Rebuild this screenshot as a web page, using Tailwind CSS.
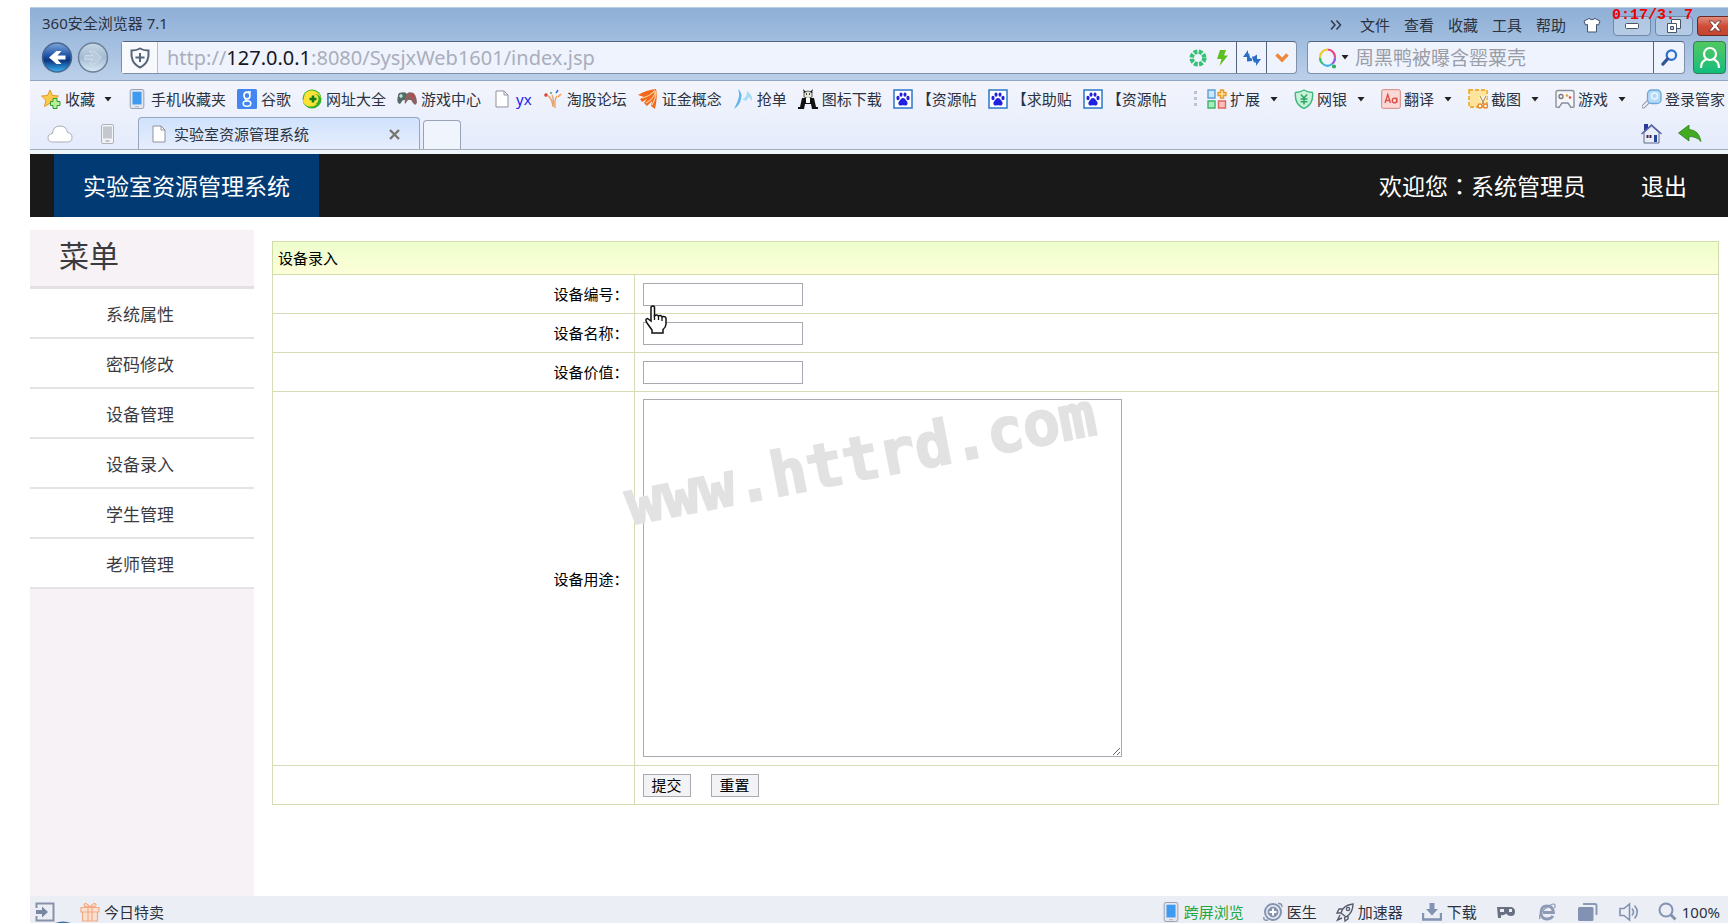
<!DOCTYPE html>
<html lang="zh-CN">
<head>
<meta charset="utf-8">
<title>实验室资源管理系统</title>
<script src="https://cdn.jsdelivr.net/npm/@tailwindcss/browser@4"></script>
</head>
<body class="flex min-h-screen flex-col overflow-x-hidden bg-white pl-[30px] pt-[7px] font-['Noto_Sans','Noto_Sans_CJK_SC',sans-serif] text-[15px] leading-5 text-[#2b3240]">
<svg class="hidden" aria-hidden="true">
  <symbol id="paw" viewBox="0 0 20 20"><rect x="1" y="1" width="18" height="18" fill="#fff" stroke="#2a78c8" stroke-width="1.5"/><g fill="#1f22e0"><ellipse cx="5" cy="9" rx="1.6" ry="2.2"/><ellipse cx="8" cy="5.6" rx="1.5" ry="2.2"/><ellipse cx="12" cy="5.6" rx="1.5" ry="2.2"/><ellipse cx="15" cy="9" rx="1.6" ry="2.2"/><path d="M10 9c-2 0-2.500 2-4 3.500-1.500 2 0 4.500 2 4 1.500-.4 2.500-.4 4 0 2 .5 3.500-2 2-4C12.500 11 12 9 10 9z"/></g></symbol>
  <symbol id="page" viewBox="0 0 14 18"><path d="M1 1h8l4 4v12H1z" fill="#fff" stroke="#8f939c"/><path d="M9 1v4h4" fill="none" stroke="#8f939c"/></symbol>
  <symbol id="phone" viewBox="0 0 16 22"><rect x=".5" y=".5" width="15" height="21" rx="2" fill="#e4e8ee" stroke="#8d99ad"/><rect x="3" y="3" width="10" height="14" fill="#3f9bf0"/><path d="M6 19.500h4" stroke="#aaa"/></symbol>
  <symbol id="caret" viewBox="0 0 8 5"><path d="M.5 0h7L4 4.500z" fill="#222"/></symbol>
</svg>

<header>
  <div class="bg-linear-to-b from-[#8fafd6] via-[#a3bfe0] to-[#bdd0ea] border-t border-[#b9cde4]">
    <div class="flex h-[33px] items-center pl-3">
      <h1 class="pb-1">360安全浏览器 7.1</h1>
      <nav class="ml-auto flex items-center gap-[14px]" aria-label="浏览器菜单">
        <button class="w-4" aria-label="更多"><svg class="h-3 w-3" viewBox="0 0 12 12" fill="none" stroke="#2f3b4c" stroke-width="1.500"><path d="M1 1.500L5 6l-4 4.500M6.500 1.500l4 4.500-4 4.500"/></svg></button>
        <button>文件</button><button>查看</button><button>收藏</button><button>工具</button><button>帮助</button>
      </nav>
      <button class="ml-[17px]" aria-label="皮肤"><svg class="h-4 w-[18px]" viewBox="0 0 18 16"><path d="M6 1.500q3 2.500 6 0l5 2.500-1.500 4-2-.5V15h-9V7.500l-2 .5L1 4z" fill="#fff" stroke="#44536b"/></svg></button>
      <div class="relative ml-3 flex gap-1 pt-[2px]">
        <button class="flex h-5 w-[38px] items-center justify-center rounded-sm border border-[#6f87a8] bg-white/25" aria-label="最小化"><svg class="h-[6px] w-[14px]" viewBox="0 0 14 6"><rect x=".5" y=".5" width="13" height="5" rx="1" fill="#fff" stroke="#4b5563"/></svg></button>
        <button class="flex h-5 w-[38px] items-center justify-center rounded-sm border border-[#6f87a8] bg-white/25" aria-label="还原"><svg class="h-[14px] w-[14px]" viewBox="0 0 14 14" fill="#fff" stroke="#4b5563"><path d="M4.500.5h9v9h-9z"/><path d="M.5 4.500h9v9h-9z"/><path d="M3.500 7.500h3v3h-3z" fill="#a9bfdc"/></svg></button>
        <button class="flex h-5 w-[31px] items-center justify-center rounded-l-sm border border-r-0 border-[#6b2a25] bg-linear-to-b from-[#e08c7c] via-[#cf4c38] to-[#c2452f] pl-1" aria-label="关闭"><svg class="h-3 w-[14px]" viewBox="0 0 14 12"><path d="M1 1h3.500L7 3.800 9.500 1H13L9 6l4 5H9.500L7 8.200 4.500 11H1l4-5z" fill="#fff" stroke="#5b3030" stroke-width=".8"/></svg></button>
        <span class="absolute -left-px -top-2 whitespace-pre font-['Liberation_Mono',monospace] text-[15px] font-bold leading-5 text-[#f00000]">0:17/3: 7</span>
      </div>
    </div>

    <div class="flex h-10 items-start border-b border-[#93a6c4]">
      <div class="flex pl-[11px]">
        <button aria-label="后退"><svg class="h-[33px] w-8" viewBox="0 0 32 33"><defs><linearGradient id="bk" x2="0" y2="1"><stop stop-color="#7da9dd"/><stop offset=".45" stop-color="#1c4fa3"/><stop offset=".6" stop-color="#0b3580"/><stop offset="1" stop-color="#39b6f5"/></linearGradient></defs><circle cx="16" cy="16.500" r="14.500" fill="url(#bk)" stroke="#4a6690" stroke-width="1.500"/><path d="M24.500 14.500v4h-8l4 4.500h-5L8 16.500 15.500 10h5l-4 4.500z" fill="#fff"/></svg></button>
        <button class="ml-1" aria-label="前进"><svg class="h-[33px] w-8" viewBox="0 0 32 33"><defs><linearGradient id="fw" x2="0" y2="1"><stop stop-color="#c7d8e8"/><stop offset=".5" stop-color="#a5bbd2"/><stop offset="1" stop-color="#d7eaf6"/></linearGradient></defs><circle cx="16" cy="16.500" r="14.500" fill="url(#fw)" stroke="#6d8099" stroke-width="1.500"/><path d="M8 14.500h8l-4-4.500h5l7.500 6.500L17 23h-5l4-4.500H8z" fill="#b9cbdc" stroke="#cddbe8"/></svg></button>
      </div>
      <div class="ml-3 flex h-[33px] min-w-0 flex-1 rounded-sm border border-[#808fa8] border-t-[#54647c] bg-[#eff3fe]">
        <button class="flex w-9 shrink-0 items-center justify-center border-r border-[#b5bfd0] bg-[#f7f9fd]" aria-label="网站安全"><svg class="h-[22px] w-[22px]" viewBox="0 0 22 22" fill="none" stroke="#56657a" stroke-width="2"><path d="M11 1.500c2.500 1.500 5.500 2 8.500 2 .5 7-.5 13-8.500 17-8-4-9-10-8.500-17 3 0 6-.5 8.500-2z"/><path d="M11 6v9M6.500 10.500h9"/></svg></button>
        <a href="#" class="flex-1 truncate pl-[9px] text-[20px] leading-8 text-[#a9aeba]">http://<span class="text-[#15181f]">127.0.0.1</span>:8080/SysjxWeb1601/index.jsp</a>
        <div class="flex shrink-0 items-center">
          <button aria-label="兼容模式"><svg class="h-[18px] w-[18px]" viewBox="0 0 18 18" fill="none"><circle cx="9" cy="9" r="6.300" stroke="#35c274" stroke-width="4.500" stroke-dasharray="3.600 1.350"/></svg></button>
          <button class="ml-[9px] mr-2" aria-label="加速"><svg class="h-4 w-3" viewBox="0 0 12 16"><path d="M4 0h6L8 5.500h4L3.500 16l2-7H1z" fill="#5fbf1e"/></svg></button>
          <button class="flex h-[31px] w-[30px] items-center justify-center border-l border-[#54647c]" aria-label="刷新"><svg class="h-4 w-[18px]" viewBox="0 0 18 16" fill="#2c6fc4"><path d="M4 11.500V7H0l5-7v3.500h1L7 7.500l2 1.500v2z"/><path d="M14 4.500V9h4l-5 7v-3.500h-2L9.500 9 9 6.500h2z"/></svg></button>
          <button class="flex h-[31px] w-[30px] items-center justify-center border-l border-[#54647c]" aria-label="历史"><svg class="h-[10px] w-[14px]" viewBox="0 0 14 10" fill="none" stroke="#f0883c" stroke-width="3.500"><path d="M1.500 1.500L7 7l5.500-5.500"/></svg></button>
        </div>
      </div>
      <form class="ml-[10px] flex h-[33px] w-[378px] rounded-sm border border-[#808fa8] border-t-[#54647c] bg-[#eff3fe]">
        <button type="button" class="flex items-center gap-1 pl-[10px] pr-[6px]" aria-label="搜索引擎"><svg class="h-[22px] w-[19px]" viewBox="0 0 19 22" fill="none" stroke-width="2.200"><path d="M9.500 2.500a7.500 8 0 0 1 7.500 8" stroke="#e8457e"/><path d="M17 10.500a7.500 8 0 0 1-3 6.500" stroke="#8f5fd0"/><path d="M14 17a7.500 8 0 0 1-9 0" stroke="#37b5e8"/><path d="M5 17a7.500 8 0 0 1-3-6.500" stroke="#38c06d"/><path d="M2 10.500a7.500 8 0 0 1 7.500-8" stroke="#f3c62f"/><circle cx="16" cy="19.500" r="1" stroke="#2fb457"/></svg><svg class="h-[5px] w-2"><use href="#caret"/></svg></button>
        <input aria-label="搜索" class="min-w-0 flex-1 text-[19px] leading-7 placeholder:text-[#999da6] outline-none" placeholder="周黑鸭被曝含罂粟壳">
        <button type="button" class="flex w-[31px] items-center justify-center border-l border-[#54647c]" aria-label="搜索按钮"><svg class="h-[17px] w-[17px]" viewBox="0 0 18 18" fill="none" stroke="#2c72cf"><circle cx="11" cy="6.500" r="5" stroke-width="2.400"/><path d="M7 10.500L2 16" stroke-width="3.400" stroke="#33549a" stroke-linecap="round"/></svg></button>
      </form>
      <button class="ml-2 mr-[2px] flex h-[33px] w-[33px] items-center justify-center rounded-sm border border-[#3b7a55] bg-linear-to-b from-[#4fc860] to-[#08bd7c]" aria-label="账户"><svg class="h-6 w-6" viewBox="0 0 24 24" fill="none" stroke="#fff" stroke-width="2.200"><circle cx="12" cy="8" r="6"/><path d="M3 22c0-5 3-8 6-9M21 22c0-5-3-8-6-9"/></svg></button>
    </div>
  </div>

  <div class="border-b-4 border-[#eef5fb] bg-linear-to-b from-[#f3f5fd] to-[#e4ebfb]">
    <div class="flex h-9 items-center whitespace-nowrap pl-[11px] pr-[3px]">
      <nav class="flex items-center gap-[11px]" aria-label="收藏栏">
        <a href="#" class="flex items-center gap-1"><svg class="h-5 w-5" viewBox="0 0 20 20"><path d="M9 1l2.500 5.500 6 .5-4.500 4.300 1.500 6L9 14.200 3.500 17.500 5 11.300.5 7l6-.5z" fill="#fdc94a" stroke="#dd9a28"/><path d="M12 9.500h4v3h3v4h-3v3h-4v-3H9.500v-4H12z" fill="#b8f09a" stroke="#2f9a2a"/></svg>收藏<svg class="ml-[5px] mr-1 h-[5px] w-2"><use href="#caret"/></svg></a>
        <a href="#" class="flex items-center gap-1"><svg class="h-5 w-5"><use href="#phone"/></svg>手机收藏夹</a>
        <a href="#" class="flex items-center gap-1"><svg class="h-5 w-5" viewBox="0 0 20 20"><rect width="20" height="20" rx="1.500" fill="#4386f1"/><g fill="none" stroke="#fff" stroke-width="1.600"><ellipse cx="10" cy="6.500" rx="3" ry="3.400"/><path d="M11 3h3M9 10q-1 1.500 1.500 2"/><ellipse cx="10" cy="14.500" rx="3.800" ry="2.800"/></g></svg>谷歌</a>
        <a href="#" class="flex items-center gap-1"><svg class="h-5 w-5" viewBox="0 0 20 20"><circle cx="10" cy="10" r="9.500" fill="#2fae2c"/><path d="M3 4.500C9-2 19 3 19 10c-1-5-9-7-11-2-3 3 0 8 7 7-5 5-13 2-14-3z" fill="#ffe234"/><circle cx="11" cy="10" r="5.500" fill="#fbe53a"/><path d="M11 6.500v7M7.500 10h7" stroke="#0c7a1e" stroke-width="2.600"/></svg>网址大全</a>
        <a href="#" class="flex items-center gap-1"><svg class="h-5 w-5" viewBox="0 0 20 20"><path d="M1 7q0-4 4-3.500Q10 2 11 8l-1 3H6l-3 4Q-1 14 1 7z" fill="#556a62"/><path d="M9 7q1-5 6-3.500Q19 4 20 13q-1 5-4 1l-2-3h-3l-3 4Q7 13 9 7z" fill="#8a6360"/><path d="M4 5v4M2 7h4" stroke="#cfe" stroke-width="1.200"/><circle cx="15" cy="7" r="1.400" fill="#e33"/></svg>游戏中心</a>
        <a href="#" class="flex items-center gap-1 pl-[3px] text-[#2424e8]"><svg class="h-[18px] w-[17px]" viewBox="0 0 17 18"><use href="#page" width="14" height="18"/></svg>yx</a>
        <a href="#" class="flex items-center gap-1"><svg class="h-5 w-5" viewBox="0 0 20 20" fill="none" stroke-width="1.400"><path d="M5 7q4 2 5 11M9 6q2 4 1 12M14 7q-3 4-2 12" stroke="#e8a56f"/><circle cx="3" cy="6" r="1" stroke="#d8352b"/><path d="M8 3v2" stroke="#3aa53a"/><path d="M15 1l-2 3" stroke="#3b5fe0"/><path d="M18 5l-3 3" stroke="#f0a030"/></svg>淘股论坛</a>
        <a href="#" class="flex items-center gap-1"><svg class="h-5 w-5" viewBox="0 0 20 20"><path d="M0 6Q8 1 18 0q2 6-1 20l-4-3 1-5-5 5-3-3 3-4-5 3-2-3 4-2z" fill="#f2681d"/><path d="M4 9Q13 7 17 1M8 14q8-4 9.500-12M14 16q4-7 4-13" stroke="#ffd09a" stroke-width="1.200" fill="none"/></svg>证金概念</a>
        <a href="#" class="flex items-center gap-1"><svg class="h-5 w-5" viewBox="0 0 20 20"><path d="M5 0q5 4 3 10-1 6-7 10 4-8 4.500-11Q7 6 5 0z" fill="#62b6ea"/><path d="M14 2q6 4 5 10l-3-4-3 4-4-2q5-1 5-8z" fill="#a6ddf5"/></svg>抢单</a>
        <a href="#" class="flex items-center gap-1"><svg class="h-5 w-5" viewBox="0 0 20 20"><path d="M6 3q4-2 8 0v5q-4 3-8 0z" fill="#e8e8dc" stroke="#333" stroke-width=".8"/><path d="M5 0l3 3-2 1zM15 0l-3 3 2 1zM4 9h12l2 9h2v2h-6l-1-5H7l-1 5H0v-2h2z" fill="#111"/><path d="M8 9h4v5H8z" fill="#fff"/><path d="M8 5h1M11 5h1" stroke="#111" stroke-width="1.500"/></svg>图标下载</a>
        <a href="#" class="flex items-center gap-1"><svg class="h-5 w-5"><use href="#paw"/></svg>【资源帖</a>
        <a href="#" class="flex items-center gap-1"><svg class="h-5 w-5"><use href="#paw"/></svg>【求助贴</a>
        <a href="#" class="flex items-center gap-1"><svg class="h-5 w-5"><use href="#paw"/></svg>【资源帖</a>
      </nav>
      <div class="ml-auto flex items-center">
        <svg class="mr-[9px] h-4 w-1" viewBox="0 0 4 16" fill="#bcc3d0"><path d="M0 0h3v3H0zM0 6h3v3H0zM0 12h3v3H0z"/></svg>
        <div class="flex items-center gap-4">
          <button class="flex items-center gap-[3px]"><svg class="h-5 w-5" viewBox="0 0 20 20" stroke-width="1.400"><path d="M1 1h7v8H1z" fill="#cde6fa" stroke="#5b9ed6"/><path d="M1 12h7v7H1z" fill="#a9ecc0" stroke="#3fb36a"/><path d="M11.500 12h7v7h-7z" fill="#fbc0bd" stroke="#e0665f"/><path d="M13.500 1h3v2.500H19v3h-2.500V9h-3V6.500H11v-3h2.500z" fill="#ffe19a" stroke="#e59a2d"/></svg>扩展<svg class="ml-[7px] h-[5px] w-2"><use href="#caret"/></svg></button>
          <button class="flex items-center gap-[3px]"><svg class="h-5 w-5" viewBox="0 0 20 20" fill="none"><path d="M10 1q4 2.500 8.500 2.500Q20 15 10 19.500 0 15 1.500 3.500 6 3.500 10 1z" fill="#c9f2db" stroke="#3fb97b" stroke-width="1.400"/><path d="M7 5.500L10 9l3-3.500M10 9v6.500M6.500 10h7M6.500 12.700h7" stroke="#2aa566" stroke-width="1.500"/></svg>网银<svg class="ml-[7px] h-[5px] w-2"><use href="#caret"/></svg></button>
          <button class="flex items-center gap-[3px]"><svg class="h-5 w-5" viewBox="0 0 20 20" fill="none" stroke="#d9514c"><rect x=".7" y=".7" width="18.600" height="18.600" rx="1.500" fill="#fbd9d6" stroke="#d8837d"/><path d="M4 14l2.800-8.500L9.500 14M5 11.500h3.500" stroke-width="1.400"/><ellipse cx="13.500" cy="11.500" rx="2.200" ry="2.400" stroke-width="1.400"/><path d="M15.800 8.500V14" stroke-width="1.300"/></svg>翻译<svg class="ml-[7px] h-[5px] w-2"><use href="#caret"/></svg></button>
          <button class="flex items-center gap-[3px]"><svg class="h-5 w-5" viewBox="0 0 20 20" fill="none"><rect x="1" y="1" width="18" height="17" fill="#ffe59b" stroke="#eeb03c" stroke-width="1.800" stroke-dasharray="4 2"/><path d="M12 7l4 8M18 7l-4 8" stroke="#fff" stroke-width="3"/><path d="M12 7l4 8M18 7l-4 8" stroke="#b59050" stroke-width="1.200"/><circle cx="12" cy="17" r="2" fill="#fff" stroke="#e8892c" stroke-width="1.500"/><circle cx="17.500" cy="17" r="2" fill="#fff" stroke="#e8892c" stroke-width="1.500"/></svg>截图<svg class="ml-[7px] h-[5px] w-2"><use href="#caret"/></svg></button>
          <button class="flex items-center gap-[3px]"><svg class="h-5 w-5" viewBox="0 0 20 20"><path d="M3 1.500h14q2 0 2 2v14.500l-3 .5-3-4.500H7l-3 4.500-3-.5V3.500q0-2 2-2z" fill="#f6f6f9" stroke="#8a8f9c" stroke-width="1.400"/><circle cx="6" cy="7.500" r="2" fill="none" stroke="#777" stroke-width="1.300"/><circle cx="12" cy="6.500" r="1.300" fill="#f0a030"/><circle cx="15" cy="8.500" r="1.300" fill="#e04a40"/></svg>游戏<svg class="ml-[7px] h-[5px] w-2"><use href="#caret"/></svg></button>
          <button class="flex items-center gap-[3px]"><svg class="h-5 w-5" viewBox="0 0 20 20"><path d="M7 12l-5.500 5.500" stroke="#99a" stroke-width="4" stroke-linecap="round"/><path d="M7 12l-5.500 5.500" stroke="#eef" stroke-width="2" stroke-linecap="round"/><rect x="5.500" y="1" width="13.500" height="13.500" rx="4" fill="#b5daf5" stroke="#6aa9dc" stroke-width="1.300"/><circle cx="12.500" cy="7" r="3" fill="none" stroke="#eaf6ff" stroke-width="1.500"/></svg>登录管家</button>
        </div>
      </div>
    </div>

    <div class="flex h-[33px] items-end border-b border-[#a6adba]">
      <button class="mb-[6px] ml-[17px]" aria-label="云同步"><svg class="h-[18px] w-[26px]" viewBox="0 0 26 18"><path d="M6 17q-5 0-5-4.500Q1 9 5.500 8.500 6 1 13 1q6.500 0 7.500 6.500 4.500.5 4.500 5T20 17z" fill="#fff" stroke="#a9adb6"/></svg></button>
      <button class="mb-[5px] ml-[27px]" aria-label="手机"><svg class="h-5 w-[15px]" viewBox="0 0 15 20"><rect x="1.500" y=".5" width="12" height="19" rx="1.500" fill="#f2f3f6" stroke="#b0b3bb"/><path d="M3 2.500h9v12H3z" fill="#c5c8cf"/><path d="M5.500 17h4" stroke="#999"/></svg></button>
      <div class="ml-[23px] flex h-8 w-[282px] items-center rounded-t border border-b-0 border-[#98a6bd] bg-linear-to-b from-[#cfe2fd] to-[#e7eefc] px-[13px] pt-px">
        <svg class="h-[18px] w-[14px]"><use href="#page"/></svg>
        <span class="ml-2">实验室资源管理系统</span>
        <button class="ml-auto mr-[6px]" aria-label="关闭标签"><svg class="h-[11px] w-[11px]" viewBox="0 0 11 11" stroke="#77756f" stroke-width="2.400"><path d="M1 1l9 9M10 1l-9 9"/></svg></button>
      </div>
      <button class="ml-[3px] h-[29px] w-[38px] rounded-t border border-b-0 border-[#98a3b5] bg-[#f0f4fd]" aria-label="新建标签"></button>
      <div class="mb-[5px] ml-auto mr-[26px] flex items-center gap-4">
        <button aria-label="主页"><svg class="h-[21px] w-[21px]" viewBox="0 0 21 21"><path d="M3 9.500L10.500 3 18 9.500V20H3z" fill="#e9edf5" stroke="#5d6c8c"/><path d="M3 1h4v4L3 8z" fill="#27379a"/><path d="M.5 11L10.500 2l10 9" fill="none" stroke="#5562ad" stroke-width="1.500"/><path d="M13 12h3v7h-3z" fill="#27449c"/><path d="M5.500 12h2v3h-2zM8.500 12h2v3h-2z" fill="#425"/></svg></button>
        <button aria-label="恢复"><svg class="h-[17px] w-6" viewBox="0 0 24 17"><path d="M11 0v4.500Q21 5 23 16.500 19 11.500 11 11.500V16L.5 8z" fill="#43ab22" stroke="#2d7f1b" stroke-width=".8"/></svg></button>
      </div>
    </div>
  </div>
</header>

<header class="flex h-[63px] shrink-0 items-stretch bg-[#191919] pl-6 text-[23px] leading-8 text-white">
  <a href="#" class="flex items-center bg-[#023a74] px-[29px]">实验室资源管理系统</a>
  <div class="ml-auto flex items-center gap-[55px] pr-[41px]">
    <span>欢迎您<span class="font-['Noto_Sans_CJK_TC',sans-serif]" lang="zh-TW">：</span>系统管理员</span>
    <a href="#">退出</a>
  </div>
</header>

<div class="flex flex-1 items-stretch pt-[13px]">
  <aside class="w-[224px] shrink-0 bg-[#f6f2f6] text-[#3b3b3f]">
    <h2 class="h-[59px] border-b-[3px] border-[#e4e1e4] pl-[29px] pt-1 text-[30px] leading-[44px]">菜单</h2>
    <nav class="flex flex-col text-center text-[17px]" aria-label="菜单">
      <a href="#" class="h-[50px] border-b-2 border-[#e4e4e6] bg-white pr-1 leading-[51px]">系统属性</a>
      <a href="#" class="h-[50px] border-b-2 border-[#e4e4e6] bg-white pr-1 leading-[51px]">密码修改</a>
      <a href="#" class="h-[50px] border-b-2 border-[#e4e4e6] bg-white pr-1 leading-[51px]">设备管理</a>
      <a href="#" class="h-[50px] border-b-2 border-[#e4e4e6] bg-white pr-1 leading-[51px]">设备录入</a>
      <a href="#" class="h-[50px] border-b-2 border-[#e4e4e6] bg-white pr-1 leading-[51px]">学生管理</a>
      <a href="#" class="h-[50px] border-b-2 border-[#e4e4e6] bg-white pr-1 leading-[51px]">老师管理</a>
    </nav>
  </aside>

  <main class="flex-1 pl-[18px] pr-[9px] pt-[11px] font-['Noto_Sans_CJK_SC',sans-serif] text-black">
    <form>
      <table class="w-full table-fixed border-collapse border border-[#d6dcb4]">
        <colgroup><col class="w-1/4"><col></colgroup>
        <thead>
          <tr><th colspan="2" class="h-[33px] border border-[#d0dcaa] bg-linear-to-b from-[#edfdcb] to-[#fdfed9] px-[5px] text-left font-normal">设备录入</th></tr>
        </thead>
        <tbody>
          <tr>
            <th class="h-[39px] border border-[#d6dcb4] pr-[5px] text-right font-normal"><label for="code">设备编号：</label></th>
            <td class="relative border border-[#d6dcb4] px-2">
              <input id="code" class="block h-[23px] w-40 border border-[#a9a9b1] bg-white px-1">
              <svg class="absolute left-[10px] top-[30px] z-10 h-[29px] w-[22px]" viewBox="0 0 22 29"><path d="M6 2q2-2 3.500 0v9q2-2 4 0 2-1.500 3.500.7 3-1 4 1.300V19q0 3-3 5.500V28H7v-3L2 18q-2.500-4 .5-4.500L6 16z" fill="#fff" stroke="#111" stroke-width="1.500"/><path d="M9.500 10v5M13.500 11v4M17 12v4" stroke="#111" stroke-width="1.300"/></svg>
            </td>
          </tr>
          <tr>
            <th class="h-[39px] border border-[#d6dcb4] pr-[5px] text-right font-normal"><label for="name">设备名称：</label></th>
            <td class="border border-[#d6dcb4] px-2"><input id="name" class="block h-[23px] w-40 border border-[#a9a9b1] bg-white px-1"></td>
          </tr>
          <tr>
            <th class="h-[39px] border border-[#d6dcb4] pr-[5px] text-right font-normal"><label for="value">设备价值：</label></th>
            <td class="border border-[#d6dcb4] px-2"><input id="value" class="block h-[23px] w-40 border border-[#a9a9b1] bg-white px-1"></td>
          </tr>
          <tr>
            <th class="border border-[#d6dcb4] pr-[5px] text-right font-normal"><label for="usage">设备用途：</label></th>
            <td class="relative border border-[#d6dcb4] px-2 pb-2 pt-[7px]">
              <textarea id="usage" class="block h-[358px] w-[479px] resize border border-[#a9a9b1] bg-white p-1"></textarea>
              <span class="pointer-events-none absolute -left-1 top-[87px] origin-bottom-left -rotate-11 whitespace-nowrap font-['DejaVu_Sans_Mono',monospace] text-[61px] font-bold leading-[50px] text-[#e2e2e2] [-webkit-text-stroke:2px_#e2e2e2] text-shadow-[0_0_3px_#fff]">www.httrd.com</span>
            </td>
          </tr>
          <tr>
            <td class="h-[39px] border border-[#d6dcb4]"></td>
            <td class="border border-[#d6dcb4] px-2">
              <div class="flex gap-5">
                <button type="button" class="h-[23px] border border-[#a9a9b1] bg-[#f3f2f5] px-2">提交</button>
                <button type="reset" class="h-[23px] border border-[#a9a9b1] bg-[#f3f2f5] px-2">重置</button>
              </div>
            </td>
          </tr>
        </tbody>
      </table>
    </form>
  </main>
</div>

<footer class="relative flex h-[27px] shrink-0 items-center overflow-hidden bg-[#eceef6] pl-[5px] pr-2 pt-1">
  <button aria-label="侧边栏"><svg class="h-5 w-5" viewBox="0 0 20 20"><path d="M1.500 6V1.500h17v17h-17V14" fill="none" stroke="#8792a8" stroke-width="2"/><path d="M1 8h6V4.500l6 5.500-6 5.500V12H1z" fill="#7887a3"/></svg></button>
  <a href="#" class="ml-[25px] flex items-center gap-1"><svg class="h-5 w-5" viewBox="0 0 20 20" fill="#fbe0cf" stroke="#f3a983" stroke-width="1.200"><path d="M1 5.500h18V10H1zM2.500 10h15v9h-15zM8 5.500v13.500M12 5.500v13.500"/><path d="M10 5Q5-1 4 3q0 2 6 2zM10 5q5-6 6-2 0 2-6 2z"/></svg>今日特卖</a>
  <svg class="absolute bottom-0 left-[25px] h-[2px] w-4" viewBox="0 0 16 2"><path d="M0 2q8-3 16 0z" fill="#3d6f9f"/></svg>
  <div class="ml-auto flex items-center gap-[19px]">
    <a href="#" class="flex items-center gap-[5px] text-[#22a83e]"><svg class="h-5 w-4"><use href="#phone"/></svg>跨屏浏览</a>
    <a href="#" class="flex items-center gap-1"><svg class="h-5 w-5" viewBox="0 0 20 20" fill="none" stroke="#8493b0"><circle cx="10" cy="10" r="8" stroke-width="2"/><circle cx="10" cy="10" r="5" fill="#8493b0"/><path d="M10 6.500v7M6.500 10h7" stroke="#fff" stroke-width="2"/><path d="M1 15q-1 4 4 3M19 5q0-4-4-3.500" stroke-width="1.500"/></svg>医生</a>
    <a href="#" class="flex items-center gap-1"><svg class="h-5 w-[18px]" viewBox="0 0 18 20" fill="none" stroke="#555c6b" stroke-width="1.400"><path d="M5 11Q7 3 17 2q0 9-7 13zM7 7H3l-2 4h4M12 13v4l-3 2-.5-4M4 13l-2.500 5L6 16"/><circle cx="12" cy="7" r="1.600"/></svg>加速器</a>
    <a href="#" class="flex items-center gap-[5px]"><svg class="h-[18px] w-5" viewBox="0 0 20 18" fill="#8292b2"><path d="M7.500 0h5v6H16l-6 6.500L4 6h3.500z"/><path d="M1 10v6.500h18V10" fill="none" stroke="#8292b2" stroke-width="2.400"/></svg>下载</a>
    <button aria-label="游戏"><svg class="h-3 w-5" viewBox="0 0 20 12"><path d="M1 1h13q5 0 5 4.500T15 10q-3 0-5-2.500Q8 10 5 9v3H2z" fill="#687082"/><path d="M4 3h4v3H4zM13 3h3v3h-3z" fill="#eceef6"/></svg></button>
    <button class="ml-[3px]" aria-label="浏览模式"><svg class="h-[18px] w-[18px]" viewBox="0 0 18 18" fill="none" stroke="#8c9ab6"><path d="M15 13q-2 3-6 3-6 0-6-6.500T9 3q6 0 6.500 6.500H5" stroke-width="2.800"/><path d="M2 16q-2-5 6-11 8-6 9-3 .4 1-.5 3" stroke-width="1.200"/></svg></button>
    <button class="ml-[3px]" aria-label="窗口"><svg class="h-[19px] w-5" viewBox="0 0 20 19"><path d="M5 2h12q1.500 0 1.500 1.500V13" fill="none" stroke="#8c9ab6" stroke-width="2"/><rect y="5" width="15.500" height="14" rx="1.500" fill="#8292b2"/></svg></button>
    <button class="ml-[2px]" aria-label="声音"><svg class="h-5 w-5" viewBox="0 0 20 20" fill="none" stroke="#8292b2" stroke-width="1.600"><path d="M1 6.500h4L10.500 2v16L5 13.500H1zM13 6.500q3 3.500 0 7M15.500 3.500q5.500 6.500 0 13"/></svg></button>
    <button class="flex items-center gap-[5px]"><svg class="h-[19px] w-[19px]" viewBox="0 0 19 19" fill="none" stroke="#8292b2"><circle cx="8" cy="8" r="6.500" stroke-width="2"/><path d="M12.500 12.500l5 5" stroke-width="3"/></svg>100%</button>
  </div>
</footer>
</body>
</html>
